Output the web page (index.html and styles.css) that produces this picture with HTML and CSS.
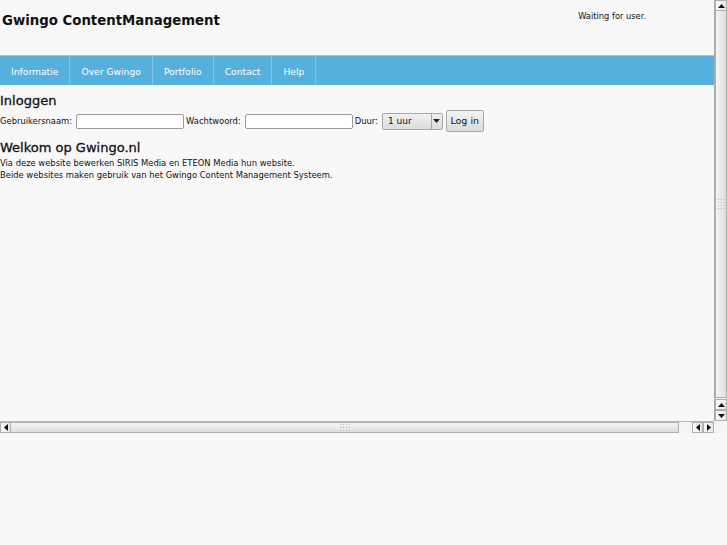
FILE: index.html
```html
<!DOCTYPE html>
<html>
<head>
<meta charset="utf-8">
<link rel="stylesheet" href="styles.css">
</head>
<body>
<div class="viewport">
  <div class="page">
    <div class="header">
      <div class="title">Gwingo ContentManagement</div>
      <div class="status">Waiting for user.</div>
    </div>
    <div class="nav">
      <a class="nav-item">Informatie</a>
      <a class="nav-item">Over Gwingo</a>
      <a class="nav-item">Portfolio</a>
      <a class="nav-item">Contact</a>
      <a class="nav-item">Help</a>
    </div>
    <div class="main">
      <h2 class="heading">Inloggen</h2>
      <form class="login">
        <label>Gebruikersnaam:</label>
        <span class="input"></span>
        <label>Wachtwoord:</label>
        <span class="input"></span>
        <label>Duur:</label>
        <span class="select"><span class="select-text">1 uur</span><span class="select-btn"><svg width="7" height="4" viewBox="0 0 7 4"><path d="M0 0H7L3.5 4Z" fill="#222"/></svg></span></span>
        <span class="button">Log in</span>
      </form>
      <h2 class="heading welcome">Welkom op Gwingo.nl</h2>
      <p class="text">Via deze website bewerken SIRIS Media en ETEON Media hun website.<br>Beide websites maken gebruik van het Gwingo Content Management Systeem.</p>
    </div>
  </div>
  <div class="vscroll">
    <div class="sb-btn"><svg width="7" height="4" viewBox="0 0 7 4"><path d="M3.5 0L7 4H0Z" fill="#111"/></svg></div>
    <div class="vthumb"><div class="grip vgrip"></div></div>
    <div class="sb-btn"><svg width="7" height="4" viewBox="0 0 7 4"><path d="M3.5 0L7 4H0Z" fill="#111"/></svg></div>
    <div class="sb-btn"><svg width="7" height="4" viewBox="0 0 7 4"><path d="M0 0H7L3.5 4Z" fill="#111"/></svg></div>
  </div>
  <div class="hscroll">
    <div class="sb-btn h"><svg width="4" height="7" viewBox="0 0 4 7"><path d="M0 3.5L4 0V7Z" fill="#111"/></svg></div>
    <div class="hthumb"><div class="grip hgrip"></div></div>
    <div class="hspace"></div>
    <div class="sb-btn h"><svg width="4" height="7" viewBox="0 0 4 7"><path d="M0 3.5L4 0V7Z" fill="#111"/></svg></div>
    <div class="sb-btn h"><svg width="4" height="7" viewBox="0 0 4 7"><path d="M4 3.5L0 0V7Z" fill="#111"/></svg></div>
  </div>
  <div class="corner"></div>
</div>
</body>
</html>
```
FILE: styles.css
```css
html, body {
  margin: 0;
  padding: 0;
  background: #f8f8f8;
  font-family: "DejaVu Sans", sans-serif;
  color: #111;
}
.viewport {
  width: 727px;
  height: 433px;
  display: grid;
  grid-template-columns: 714px 13px;
  grid-template-rows: 421px 12px;
}
.page {
  overflow: hidden;
}
.header {
  height: 55px;
  display: flex;
  justify-content: space-between;
}
.title {
  font-weight: bold;
  font-size: 13.3px;
  padding: 13px 0 0 2px;
}
.status {
  font-size: 8.3px;
  padding: 11px 68px 0 0;
}
.nav {
  height: 30px;
  background: #55b0de;
  display: flex;
  border-top: 1px solid #8fcbec;
  box-sizing: border-box;
}
.nav-item {
  color: #fff;
  font-size: 9.2px;
  line-height: 29px;
  padding: 1px 11px 0;
  border-right: 1px solid #7cc1e6;
}
.main {
  padding: 0;
}
.heading {
  font-size: 13px;
  font-weight: normal;
  margin: 8px 0 0;
  line-height: 16px;
  -webkit-text-stroke: 0.3px #111;
}
.welcome {
  margin-top: 8px;
}
.login {
  display: flex;
  align-items: center;
  font-size: 8.4px;
  margin-top: 1px;
  height: 22px;
}
.login label {
  margin-right: 4px;
}
.input {
  width: 106px;
  height: 13px;
  border: 1px solid #9a9a9a;
  border-radius: 2px;
  background: #fff;
  margin-right: 2px;
}
.select {
  display: flex;
  width: 59px;
  height: 15px;
  border: 1px solid #a8a8a8;
  border-radius: 2px;
  background: linear-gradient(#f0f0f0, #dcdcdc);
  margin-right: 3px;
}
.select-text {
  flex: 1;
  font-size: 9px;
  line-height: 15px;
  padding-left: 5px;
}
.select-btn {
  width: 10px;
  border-left: 1px solid #a8a8a8;
  display: flex;
  align-items: center;
  justify-content: center;
}
.button {
  font-size: 9.5px;
  height: 20px;
  line-height: 20px;
  padding: 0 3.5px;
  border: 1px solid #a8a8a8;
  border-radius: 2px;
  background: linear-gradient(#f4f4f4, #dadada);
}
.text {
  font-size: 8.4px;
  line-height: 12px;
  margin: 1px 0 0;
}
.vscroll {
  display: flex;
  flex-direction: column;
  background: #ececec;
  border-left: 1px solid #a9a9a9;
}
.sb-btn {
  height: 11px;
  display: flex;
  align-items: center;
  justify-content: center;
  background: linear-gradient(90deg, #fafafa, #e6e6e6);
  border: 1px solid #b0b0b0;
  box-sizing: border-box;
}
.sb-btn.h {
  width: 11px;
  height: 11px;
}
.vthumb {
  flex: 1;
  margin: 0 0 1px;
  background: linear-gradient(90deg, #f4f4f4, #dedede);
  border: 1px solid #b0b0b0;
  border-top: none;
  display: flex;
  align-items: center;
  justify-content: center;
}
.grip {
  background-image: radial-gradient(circle, #b8b8b8 0.9px, transparent 1px);
  background-size: 3px 3px;
}
.vgrip {
  width: 9px;
  height: 12px;
}
.hgrip {
  width: 12px;
  height: 9px;
}
.hscroll {
  display: flex;
  align-items: center;
  background: #f4f4f4;
  border-top: 1px solid #b8b8b8;
}
.hthumb {
  width: 668px;
  height: 11px;
  box-sizing: border-box;
  background: linear-gradient(#f4f4f4, #dedede);
  border: 1px solid #b0b0b0;
  border-left: none;
  display: flex;
  align-items: center;
  justify-content: center;
}
.hspace {
  flex: 1;
}
.corner {
  background: #f4f4f4;
}
```
